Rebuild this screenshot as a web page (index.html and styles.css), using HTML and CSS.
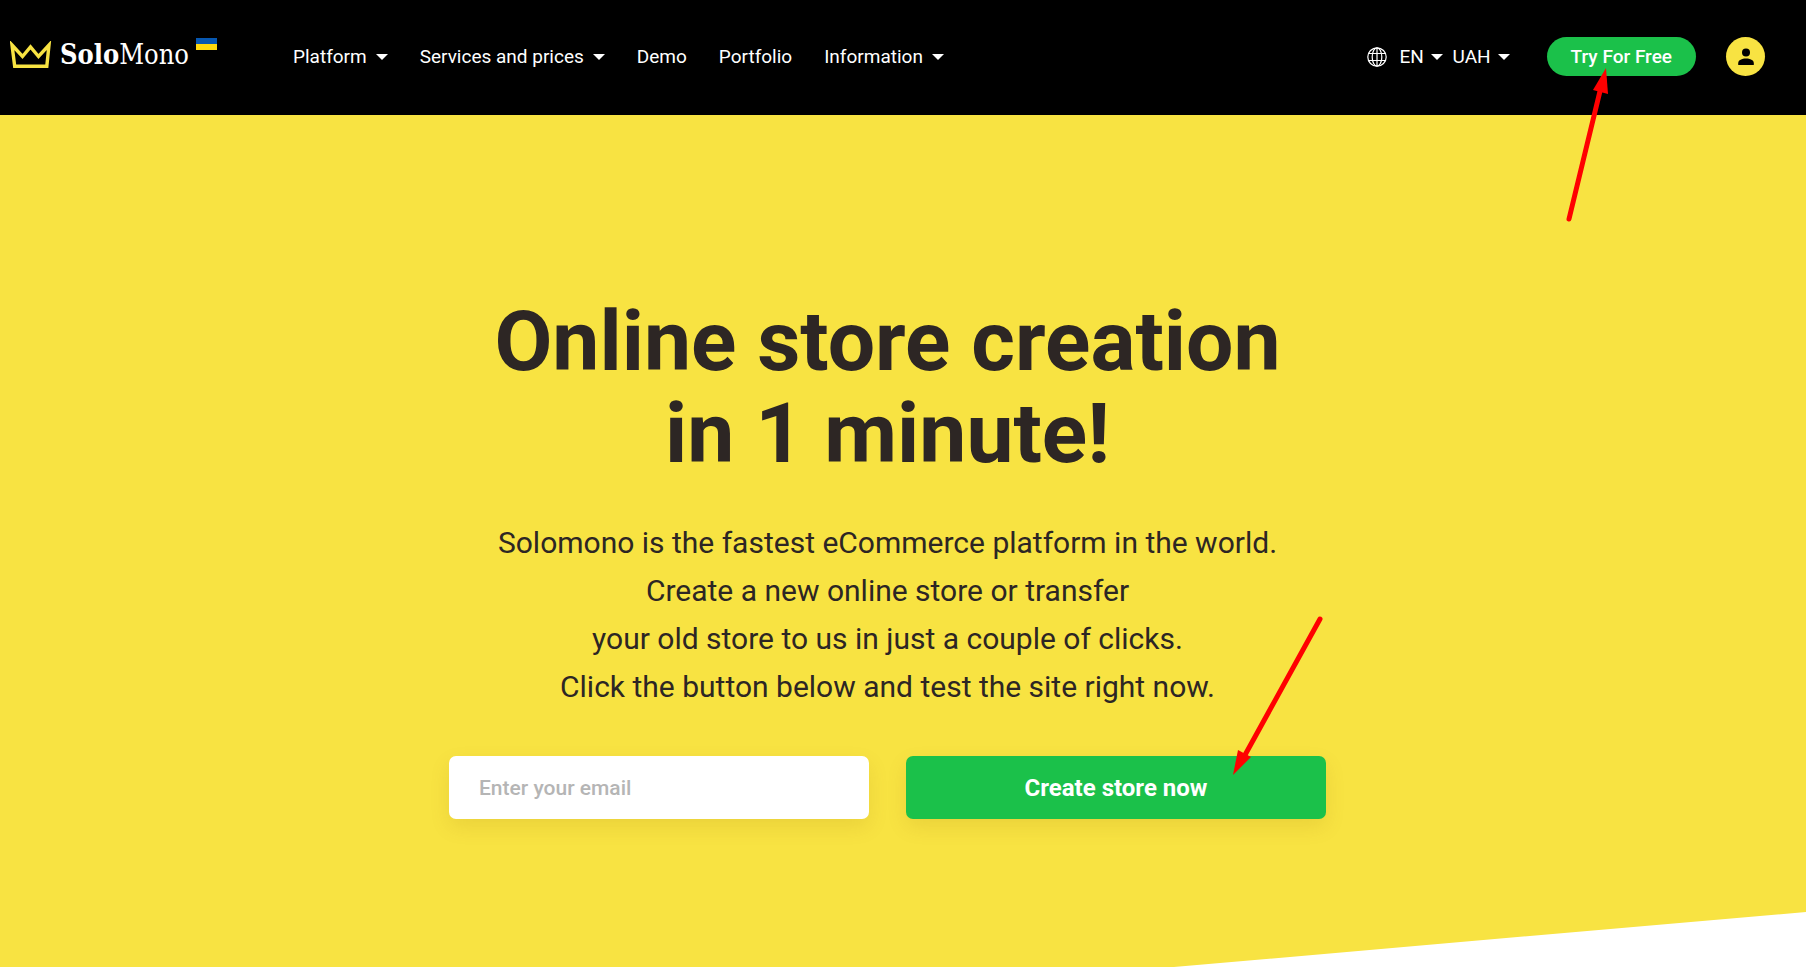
FILE: index.html
```html
<!DOCTYPE html>
<html lang="en">
  <head>
    <meta charset="UTF-8" />
    <meta name="viewport" content="width=device-width, initial-scale=1" />
    <title>SoloMono</title>
    <link rel="stylesheet" href="styles.css">
  </head>
  <body>
    <header class="header">
      <a href="#" class="logo">
        <svg class="crown" viewBox="0 0 42 28" aria-hidden="true">
          <path d="M2 4 L12.500 15.500 L20.500 6 L28.500 15.500 L39 4 L36.800 25.200 H4.700 Z" fill="none" stroke="#f8e342" stroke-width="3.400" stroke-miterlimit="8" />
        </svg>
        <span class="logo-text"><b>Solo</b>Mono</span>
        <span class="flag"></span>
      </a>

      <nav class="nav">
        <button type="button" class="nav-item">Platform <span class="caret"></span></button>
        <button type="button" class="nav-item">Services and prices <span class="caret"></span></button>
        <a href="#" class="nav-item">Demo</a>
        <a href="#" class="nav-item">Portfolio</a>
        <button type="button" class="nav-item">Information <span class="caret"></span></button>
      </nav>

      <div class="locale">
        <svg class="globe" viewBox="0 0 20 20" fill="none" stroke="#fff" stroke-width="1.200" aria-hidden="true">
          <circle cx="10" cy="10" r="9.200" />
          <ellipse cx="10" cy="10" rx="4.800" ry="9.200" />
          <path d="M10 1V19M1.500 6.500H18.500M1.500 13.500H18.500" />
        </svg>
        <label class="picker">
          <select aria-label="Language"><option>EN</option></select>
          <span class="caret"></span>
        </label>
        <label class="picker">
          <select aria-label="Currency"><option>UAH</option></select>
          <span class="caret"></span>
        </label>
      </div>

      <div class="actions">
        <a href="#" class="try-btn">Try For Free</a>
        <a href="#" class="user-btn" aria-label="Account">
          <svg viewBox="0 0 16 18" aria-hidden="true">
            <circle cx="8" cy="4.500" r="4" />
            <path d="M0.200 17V15.200C0.200 12.200 4 10.600 8 10.600S15.800 12.200 15.800 15.200V17Z" />
          </svg>
        </a>
        <svg class="arrow arrow-try" viewBox="0 0 46 160" aria-hidden="true">
          <path d="M5 154 L37 22" />
          <polygon points="42,3 29,25 44,29" />
        </svg>
      </div>
    </header>

    <main class="hero">
      <h1>Online store creation<br>in 1 minute!</h1>
      <p>
        Solomono is the fastest eCommerce platform in the world.<br>
        Create a new online store or transfer<br>
        your old store to us in just a couple of clicks.<br>
        Click the button below and test the site right now.
      </p>
      <form class="signup">
        <input type="email" placeholder="Enter your email" aria-label="Enter your email">
        <button type="submit">Create store now</button>
        <svg class="arrow arrow-create" viewBox="0 0 96 164" aria-hidden="true">
          <path d="M90 6 L15 142" />
          <polygon points="3,162 8,137 21,144" />
        </svg>
      </form>
    </main>
  </body>
</html>
```

FILE: styles.css
```css
* {
  margin: 0;
  padding: 0;
  box-sizing: border-box;
}

body {
  font-family: Roboto, "Liberation Sans", sans-serif;
  background: #fff;
  color: #2d2624;
  min-height: 100vh;
  display: flex;
  flex-direction: column;
}

a {
  color: inherit;
  text-decoration: none;
}

button,
input,
select {
  font: inherit;
  color: inherit;
  border: none;
  background: none;
}

button,
select {
  cursor: pointer;
}

/* Header */
.header {
  background: #000;
  color: #fff;
  padding: 37px 41px 39px 10px;
  display: flex;
  align-items: center;
  font-size: 19px;
  line-height: 24px;
  position: relative;
  z-index: 1;
}

.logo {
  display: flex;
  align-items: center;
  margin-right: 76px;
  margin-bottom: 4px;
}

.crown {
  width: 42px;
  height: 28px;
  margin-right: 8px;
}

.logo-text {
  font-family: "DejaVu Serif Condensed", "DejaVu Serif", serif;
  font-size: 27px;
  line-height: 34px;
}

.flag {
  width: 21px;
  height: 12px;
  margin-left: 7px;
  align-self: flex-start;
  background: linear-gradient(#0757b0 50%, #ffd90c 50%);
}

.nav {
  display: flex;
  gap: 32px;
}

.nav-item {
  display: flex;
  align-items: center;
  white-space: nowrap;
}

.caret {
  margin-left: 9px;
  border: 6px solid transparent;
  border-top-color: #fff;
  border-bottom: none;
}

.locale {
  display: flex;
  align-items: center;
  gap: 10px;
  margin-left: auto;
  margin-right: 37px;
}

.globe {
  width: 20px;
  height: 20px;
  margin-right: 3px;
}

.picker {
  display: flex;
  align-items: center;
}

.picker select {
  appearance: none;
}

.picker .caret {
  margin-left: 6px;
}

.actions {
  display: flex;
  gap: 30px;
  position: relative;
}

.try-btn {
  background: #1bc14a;
  border-radius: 20px;
  padding: 0 24px;
  font-weight: 500;
  line-height: 39px;
}

.user-btn {
  width: 39px;
  height: 39px;
  border-radius: 50%;
  background: #f8e342;
  display: flex;
  align-items: center;
  justify-content: center;
}

.user-btn svg {
  width: 16px;
  height: 18px;
}

/* Hero */
.hero {
  flex: 1;
  background: #f8e342;
  padding: 181px 31px 142px 0;
  clip-path: polygon(0 0, 100% 0, 100% calc(100% - 55px), 65% 100%, 0 100%);
  display: flex;
  flex-direction: column;
  align-items: center;
  text-align: center;
}

.hero h1 {
  font-size: 84px;
  line-height: 92px;
  font-weight: 700;
}

.hero p {
  margin-top: 39px;
  font-size: 30px;
  line-height: 48px;
}

.signup {
  width: 100%;
  max-width: 877px;
  margin-top: 45px;
  display: grid;
  grid-template-columns: 1fr 1fr;
  gap: 37px;
  position: relative;
}

.signup input,
.signup button {
  height: 63px;
  border-radius: 7px;
  box-shadow: 0 8px 20px rgba(140, 90, 0, 0.12);
}

.signup input {
  background: #fff;
  padding: 0 30px;
  font-size: 21px;
  font-weight: 500;
}

.signup input::placeholder {
  color: #b5b5b5;
}

.signup button {
  background: #1bc14a;
  color: #fff;
  font-size: 24px;
  font-weight: 700;
}

/* Pointer arrows */
.arrow {
  position: absolute;
  fill: #f00;
  pointer-events: none;
}

.arrow path {
  stroke: #f00;
  stroke-width: 5;
  stroke-linecap: round;
}

.arrow-try {
  width: 46px;
  height: 160px;
  top: 28px;
  right: 155px;
}

.arrow-create {
  width: 96px;
  height: 164px;
  right: 0;
  bottom: 42px;
}
```
